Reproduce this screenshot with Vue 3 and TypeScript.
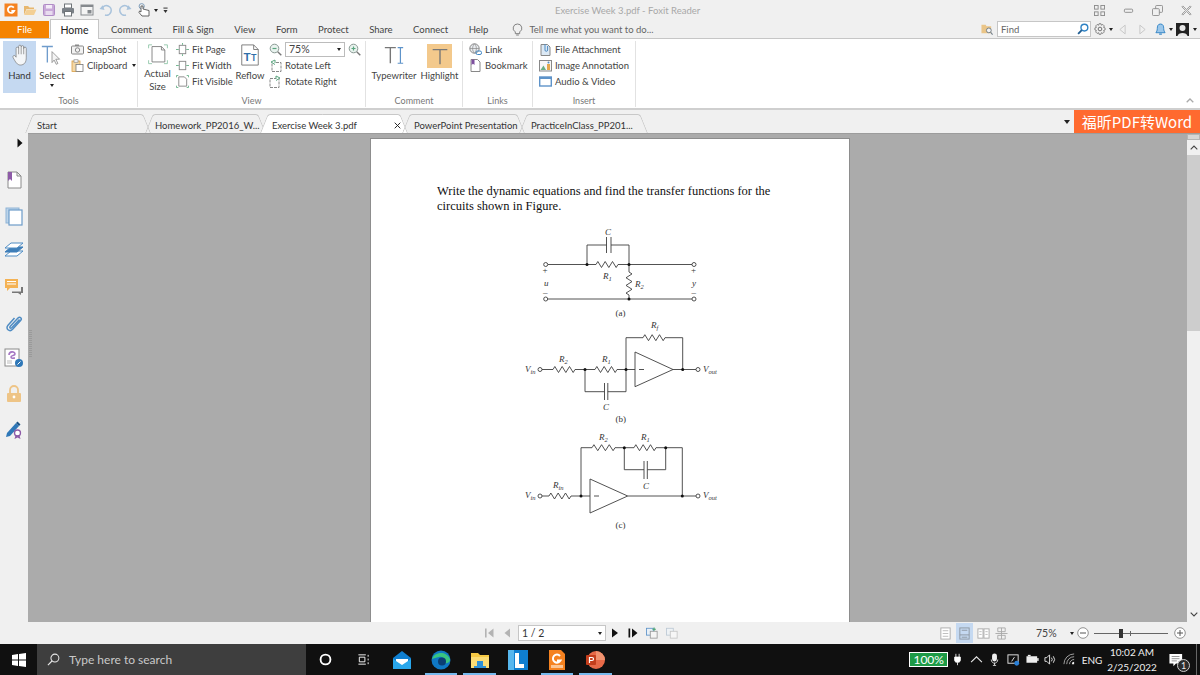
<script setup lang="ts">
const ribbonTabs = ["Comment", "Fill & Sign", "View", "Form", "Protect", "Share", "Connect", "Help"];

const docTabs = [
  { name: "Start", cls: "doc-tab--start" },
  { name: "Homework_PP2016_W...", cls: "doc-tab--homework" },
  { name: "Exercise Week 3.pdf", cls: "doc-tab--active" },
  { name: "PowerPoint Presentation", cls: "doc-tab--ppt" },
  { name: "PracticeInClass_PP201...", cls: "doc-tab--practice" },
];

// zigzag for a resistor, horizontal
const zigH = (x1: number, x2: number, y: number) => {
  const step = (x2 - x1) / 12;
  let d = `M${x1} ${y}`;
  for (let i = 1; i < 12; i += 2) {
    d += ` L${x1 + step * i} ${y + (i % 4 === 1 ? -3 : 3)}`;
  }
  return d + ` L${x2} ${y}`;
};

const zigV = (x: number, y1: number, y2: number) => {
  const step = (y2 - y1) / 12;
  let d = `M${x} ${y1}`;
  for (let i = 1; i < 12; i += 2) {
    d += ` L${x + (i % 4 === 1 ? 3 : -3)} ${y1 + step * i}`;
  }
  return d + ` L${x} ${y2}`;
};

const wires = [
  // (a)
  "M548 264.5 H596 M618 264.5 H692 M548 299 H692 M587 264.5 V245 H606.5 M611 245 H629 V264.5 M629 264.5 V272 M629 295 V299",
  "M606.5 237 V253 M611 237 V253",
  zigH(596, 618, 264.5),
  zigV(629, 272, 295),
  // (b)
  "M542 369.5 H553 M575 369.5 H595 M617 369.5 H635 M626 369.5 V337.7 H643 M665 337.7 H682.7 V369.5 M673 369.5 H696",
  "M585 369.5 V391.7 H604.5 M607.8 391.7 H626 V369.5 M604.5 383 V400 M607.8 383 V400",
  "M635 352 V386.7 L673 369.5 Z M639 369.5 H644",
  zigH(553, 575, 369.5),
  zigH(595, 617, 369.5),
  zigH(643, 665, 337.7),
  // (c)
  "M542 496 H549 M571 496 H590 M581 496 V447.7 H592 M615 447.7 H634 M656 447.7 H682.3 V496 M627.7 496 H696",
  "M624.3 447.7 V469.7 H644 M647.3 469.7 H665.7 V447.7 M644 461 V479 M647.3 461 V479",
  "M590 479 V513 L627.7 496 Z M594 496 H599",
  zigH(549, 571, 496),
  zigH(592, 615, 447.7),
  zigH(634, 656, 447.7),
];

const terminals = [
  [545.7, 264.5], [545.7, 299], [694, 264.5], [694, 299],
  [540, 369.5], [698, 369.5],
  [540, 496], [698, 496],
];

const nodes = [
  [587, 264.5], [629, 264.5], [629, 299],
  [585, 369.5], [626, 369.5], [682.7, 369.5],
  [581, 496], [624.3, 447.7], [665.7, 447.7], [682.3, 496],
];

const taskApps = ["ring", "view", "mail", "edge", "folder", "lapp", "foxit", "ppt"];
const runningApps = ["edge", "folder", "foxit", "ppt"];
</script>

<template>
  <div class="app">
    <header class="titlebar">
      <div class="qat">
        <svg class="qat-icon" viewBox="0 0 14 14"><rect x="0.5" y="0.5" width="13" height="13" fill="#f58220" /><path d="M9.8 4.6 A3.3 3.3 0 1 0 10.2 8 H7.4" fill="none" stroke="#fff" stroke-width="1.8" /></svg>
        <svg class="qat-icon" viewBox="0 0 14 14"><path d="M1 3 H5 L6.5 4.5 H11 V6 H3.5 L1 12 Z" fill="#e7b76e" /><path d="M3.7 6.5 H13.5 L11 12 H1.2 Z" fill="#f3cf94" /></svg>
        <svg class="qat-icon" viewBox="0 0 14 14"><rect x="1.5" y="1.5" width="11" height="11" rx="1" fill="#c8a9d8" stroke="#b08cc6" /><rect x="4" y="2" width="6" height="3.5" fill="#f3ecf7" /><rect x="3.5" y="8" width="7" height="4" fill="#e8dcef" /></svg>
        <svg class="qat-icon" viewBox="0 0 14 14"><rect x="3.5" y="1" width="7" height="4" fill="#fff" stroke="#6f7478" /><rect x="1" y="5" width="12" height="5.5" rx="1" fill="#7b8187" /><rect x="3.5" y="8.5" width="7" height="4.5" fill="#fff" stroke="#6f7478" /></svg>
        <svg class="qat-icon" viewBox="0 0 14 14"><rect x="1" y="2" width="12" height="10" fill="#f4f4f4" stroke="#85898d" /><rect x="1" y="2" width="12" height="2" fill="#85898d" /><rect x="7.5" y="7" width="4" height="3.5" fill="#85898d" /></svg>
        <svg class="qat-icon" viewBox="0 0 14 14"><path d="M3 5.5 A4.8 4.8 0 1 1 6 12" fill="none" stroke="#a9c3dc" stroke-width="1.6" /><path d="M0.5 6 L5.5 7 L3.7 2.2 Z" fill="#a9c3dc" /></svg>
        <svg class="qat-icon" viewBox="0 0 14 14"><path d="M11 5.5 A4.8 4.8 0 1 0 8 12" fill="none" stroke="#a9c3dc" stroke-width="1.6" /><path d="M13.5 6 L8.5 7 L10.3 2.2 Z" fill="#a9c3dc" /></svg>
        <svg class="qat-icon" viewBox="0 0 14 14"><circle cx="4.7" cy="3.2" r="2.6" fill="none" stroke="#7e9cb8" /><path d="M4 3 V9 L2.5 8 L2 9.5 L5 13 H12 V7.5 L6 6 V3 Z" fill="#fff" stroke="#555" stroke-width="0.9" /></svg>
        <span class="caret qat-caret"></span>
        <svg class="qat-more" viewBox="0 0 6 8"><rect x="0.5" y="0.5" width="5" height="1.2" fill="#333" /><path d="M0.5 3.5 H5.5 L3 7 Z" fill="#333" /></svg>
      </div>
      <div class="title">Exercise Week 3.pdf - Foxit Reader</div>
      <div class="win-btns">
        <svg viewBox="0 0 12 12"><g fill="none" stroke="#8b8b8b"><rect x="0.5" y="0.5" width="4" height="4" /><rect x="7.5" y="0.5" width="4" height="4" /><rect x="0.5" y="7.5" width="4" height="4" /><rect x="7.5" y="7.5" width="4" height="4" /></g></svg>
        <svg viewBox="0 0 12 12"><rect x="1.5" y="4.5" width="9" height="3.5" rx="1" fill="none" stroke="#8b8b8b" /></svg>
        <svg viewBox="0 0 12 12"><g fill="none" stroke="#8b8b8b"><rect x="4" y="0.5" width="7.5" height="7.5" rx="1" /><rect x="0.5" y="4" width="7.5" height="7.5" rx="1" fill="#f0f0f0" /></g></svg>
        <svg viewBox="0 0 12 12"><path d="M2 1 L6 5 L10 1 L11 2 L7 6 L11 10 L10 11 L6 7 L2 11 L1 10 L5 6 L1 2 Z" fill="none" stroke="#8b8b8b" stroke-width="0.9" /></svg>
      </div>
    </header>

    <nav class="tabrow">
      <div class="tab-file">File</div>
      <div class="tab-home">Home</div>
      <div class="tab-list">
        <span v-for="tab in ribbonTabs" :key="tab">{{ tab }}</span>
      </div>
      <svg class="bulb" viewBox="0 0 12 14"><path d="M6 1 A4.6 4.6 0 0 1 8.4 9.6 V11.5 H3.6 V9.6 A4.6 4.6 0 0 1 6 1 Z M4.5 13 H7.5" fill="none" stroke="#7a7a7a" /></svg>
      <span class="tell">Tell me what you want to do...</span>
      <div class="find-area">
        <svg class="find-folder" viewBox="0 0 13 13"><path d="M0.5 2 H5 L6 3.5 H11 V11 H0.5 Z" fill="#eac588" /><circle cx="8.5" cy="8" r="2.6" fill="#f4f4f4" stroke="#6f7c88" /><path d="M10.5 10 L12.5 12.5" stroke="#6f7c88" stroke-width="1.2" /></svg>
        <div class="find-box">
          <span>Find</span>
          <svg viewBox="0 0 13 13"><circle cx="8" cy="5" r="3.7" fill="none" stroke="#2f82c4" stroke-width="1.5" /><path d="M5.2 7.8 L1.2 11.8" stroke="#1f5d92" stroke-width="2" /></svg>
        </div>
        <svg class="gear" viewBox="0 0 13 13"><circle cx="6.5" cy="6.5" r="2" fill="none" stroke="#666" /><path d="M5.4 0.8 H7.6 L8 2.4 L9.6 1.6 L11.2 3.2 L10.4 4.8 L12 5.3 V7.6 L10.4 8.1 L11.2 9.7 L9.6 11.3 L8 10.5 L7.6 12.2 H5.4 L5 10.5 L3.4 11.3 L1.8 9.7 L2.6 8.1 L1 7.6 V5.3 L2.6 4.8 L1.8 3.2 L3.4 1.6 L5 2.4 Z" fill="none" stroke="#666" stroke-width="0.8" /></svg>
        <span class="caret gear-caret"></span>
        <svg class="nav-arrow" viewBox="0 0 8 12"><path d="M7 1 L1 6 L7 11 Z" fill="none" stroke="#c4c4c4" /></svg>
        <svg class="nav-arrow nav-arrow--next" viewBox="0 0 8 12"><path d="M1 1 L7 6 L1 11 Z" fill="none" stroke="#c4c4c4" /></svg>
        <svg class="bell" viewBox="0 0 12 14"><path d="M6 1 C9 1 9.5 3.5 9.5 6 C9.5 8.5 10.5 9.5 11 10.5 H1 C1.5 9.5 2.5 8.5 2.5 6 C2.5 3.5 3 1 6 1 Z" fill="#9cc7ea" stroke="#2f82c4" /><path d="M4.5 12 H7.5" stroke="#2f82c4" stroke-width="1.3" /></svg>
        <span class="caret bell-caret"></span>
        <svg class="avatar" viewBox="0 0 13 13"><rect width="13" height="13" fill="#222" /><circle cx="6.5" cy="5" r="3" fill="#e8e8e8" /><path d="M1.5 13 C2 9 11 9 11.5 13 Z" fill="#e8e8e8" /></svg>
        <span class="caret avatar-caret"></span>
      </div>
    </nav>

    <section class="ribbon">
      <div class="group group--tools">
        <div class="group-body">
          <div class="big big--hand">
            <svg class="big-icon" viewBox="2.5 1.5 16 22.5"><path d="M6.5 15 V6 a1.3 1.3 0 0 1 2.6 0 V4 a1.3 1.3 0 0 1 2.6 0 V4.5 a1.3 1.3 0 0 1 2.6 0 V6 a1.3 1.3 0 0 1 2.6 0 V15 C17 20 15 23 11 23 C7.5 23 6 20 3.5 15.5 C2.6 14 4.3 12.5 5.5 13.6 Z M9.1 6 V12 M11.7 4.5 V12 M14.3 5 V12" fill="#f4f6f8" stroke="#777" stroke-width="0.7" /></svg>
            <span>Hand</span>
          </div>
          <div class="big big--select">
            <svg class="big-icon" viewBox="0 0 26 26"><path d="M1 3 H14 M7.5 3 V22" stroke="#6f9ccc" stroke-width="1.6" fill="none" /><path d="M13 9 L22 18 H17.5 L20 23 L18 24 L15.5 19 L13 22 Z" fill="#f4f4f4" stroke="#777" stroke-width="0.8" /></svg>
            <span>Select</span>
            <span class="caret select-caret"></span>
          </div>
          <div class="stack stack--tools">
            <div class="row">
              <svg class="row-icon" viewBox="0 0 13 13"><rect x="0.5" y="3" width="12" height="8" rx="1" fill="#f2f2f2" stroke="#888" /><rect x="4" y="1.5" width="4" height="1.5" fill="#888" /><circle cx="6.5" cy="7" r="2.2" fill="none" stroke="#888" /></svg>
              <span>SnapShot</span>
            </div>
            <div class="row">
              <svg class="row-icon" viewBox="0 0 13 13"><rect x="1" y="2" width="8" height="10.5" fill="#f3d8a7" stroke="#d99f44" stroke-width="0.8" /><rect x="3" y="0.8" width="4" height="2.4" fill="#fff" stroke="#888" stroke-width="0.7" /><rect x="5" y="5.5" width="7" height="7" fill="#fff" stroke="#777" stroke-width="0.8" /></svg>
              <span>Clipboard</span>
              <span class="caret clip-caret"></span>
            </div>
          </div>
        </div>
        <div class="group-label">Tools</div>
      </div>

      <div class="group group--view">
        <div class="group-body">
          <div class="big big--actual">
            <svg class="big-icon" viewBox="0 0 24 24"><path d="M5 3 H16 L20 7 V21 H5 Z M16 3 V7 H20" fill="#fff" stroke="#777" /><path d="M1 5 V1 H5 M19 1 H23 V5 M1 19 V23 H5 M19 23 H23 V19" fill="none" stroke="#8bc3a5" /></svg>
            <span>Actual</span>
            <span>Size</span>
          </div>
          <div class="stack stack--fit">
            <div class="row">
              <svg class="row-icon" viewBox="0 0 14 14"><rect x="3.5" y="2.5" width="7" height="9" fill="#fff" stroke="#888" /><path d="M7 0 V2 M7 12 V14 M0 7 H3 M11 7 H14" stroke="#6bb28a" /></svg>
              <span>Fit Page</span>
            </div>
            <div class="row">
              <svg class="row-icon" viewBox="0 0 14 14"><rect x="3.5" y="2.5" width="7" height="9" fill="#fff" stroke="#888" /><path d="M0 7 H3 M11 7 H14" stroke="#6bb28a" /></svg>
              <span>Fit Width</span>
            </div>
            <div class="row">
              <svg class="row-icon" viewBox="0 0 14 14"><path d="M3 2 H9 L11.5 4.5 V12 H3 Z" fill="#fff" stroke="#888" /><path d="M0.5 2.5 V0.5 H2.5 M11.5 0.5 H13.5 V2.5 M0.5 11.5 V13.5 H2.5 M11.5 13.5 H13.5 V11.5" fill="none" stroke="#6bb28a" /></svg>
              <span>Fit Visible</span>
            </div>
          </div>
          <div class="big big--reflow">
            <svg class="big-icon" viewBox="0 0 24 24"><path d="M3 1 H16 L21 6 V23 H3 Z M16 1 V6 H21" fill="#fff" stroke="#777" /><text class="reflow-t" x="5" y="18">T</text><text class="reflow-t reflow-t--small" x="13" y="18">T</text></svg>
            <span>Reflow</span>
          </div>
          <div class="stack stack--zoom">
            <div class="row">
              <svg class="row-icon" viewBox="0 0 13 13"><circle cx="5.5" cy="5.5" r="4.3" fill="#e9f3ef" stroke="#8a9a94" /><path d="M3.5 5.5 H7.5" stroke="#5aa57f" stroke-width="1.2" /><path d="M8.7 8.7 L12.3 12.3" stroke="#777" stroke-width="1.4" /></svg>
              <div class="combo">
                <span>75%</span>
                <span class="caret"></span>
              </div>
              <svg class="row-icon zoom-in" viewBox="0 0 13 13"><circle cx="5.5" cy="5.5" r="4.3" fill="#e9f3ef" stroke="#8a9a94" /><path d="M3.5 5.5 H7.5 M5.5 3.5 V7.5" stroke="#5aa57f" stroke-width="1.2" /><path d="M8.7 8.7 L12.3 12.3" stroke="#777" stroke-width="1.4" /></svg>
            </div>
            <div class="row">
              <svg class="row-icon" viewBox="0 0 13 13"><rect x="3" y="3.5" width="9" height="9" fill="#fff" stroke="#888" stroke-dasharray="3 1" /><path d="M6 4 V1 L2 3 L6 5.5" fill="#fff" stroke="#5aa57f" /></svg>
              <span>Rotate Left</span>
            </div>
            <div class="row">
              <svg class="row-icon" viewBox="0 0 13 13"><rect x="1" y="3.5" width="9" height="9" fill="#fff" stroke="#888" stroke-dasharray="3 1" /><path d="M7 4 V1 L11 3 L7 5.5" fill="#fff" stroke="#5aa57f" /></svg>
              <span>Rotate Right</span>
            </div>
          </div>
        </div>
        <div class="group-label">View</div>
      </div>

      <div class="group group--comment">
        <div class="group-body">
          <div class="big big--type">
            <svg class="big-icon" viewBox="0 0 24 24"><path d="M2 4 H14 M8 4 V21" stroke="#777" stroke-width="1.5" fill="none" /><path d="M16 4 H22 M19 4 V21 M16 21 H22" stroke="#5e93c9" stroke-width="1.3" fill="none" /></svg>
            <span>Typewriter</span>
          </div>
          <div class="big big--highlight">
            <div class="highlight-swatch">
              <svg viewBox="0 0 24 24"><path d="M4 5 H20 M12 5 V21" stroke="#777" stroke-width="1.5" fill="none" /></svg>
            </div>
            <span>Highlight</span>
          </div>
        </div>
        <div class="group-label">Comment</div>
      </div>

      <div class="group group--links">
        <div class="group-body">
          <div class="stack">
            <div class="row">
              <svg class="row-icon" viewBox="0 0 13 13"><circle cx="5.5" cy="5.5" r="4.7" fill="#e9ecef" stroke="#888" /><path d="M0.8 5.5 H10.2 M5.5 0.8 C3 3 3 8 5.5 10.2 C8 8 8 3 5.5 0.8" fill="none" stroke="#888" stroke-width="0.7" /><rect x="7" y="8" width="5.5" height="3.5" rx="1.5" fill="none" stroke="#3f87c6" /></svg>
              <span>Link</span>
            </div>
            <div class="row">
              <svg class="row-icon" viewBox="0 0 13 13"><path d="M2 0.5 H8.5 L11 3 V12.5 H2 Z" fill="#fff" stroke="#888" /><path d="M2.5 0.5 H5.5 V6 L4 4.8 L2.5 6 Z" fill="#7d4f9e" /></svg>
              <span>Bookmark</span>
            </div>
          </div>
        </div>
        <div class="group-label">Links</div>
      </div>

      <div class="group group--insert">
        <div class="group-body">
          <div class="stack">
            <div class="row">
              <svg class="row-icon" viewBox="0 0 13 13"><path d="M2 1.5 H8.5 L11 4 V12.5 H2 Z" fill="#dce9f5" stroke="#888" /><path d="M6 1 V7 A1.3 1.3 0 0 0 8.6 7 V3" fill="none" stroke="#4f8cc3" /></svg>
              <span>File Attachment</span>
            </div>
            <div class="row">
              <svg class="row-icon" viewBox="0 0 13 13"><rect x="0.5" y="1.5" width="12" height="10.5" fill="#f7f7f7" stroke="#888" /><path d="M1.5 11 L4.5 6.5 L7 11 Z" fill="#6aae84" /><rect x="8" y="5" width="3" height="6" fill="#e5a84e" /><circle cx="9.5" cy="3.6" r="1" fill="#4f8cc3" /></svg>
              <span>Image Annotation</span>
            </div>
            <div class="row">
              <svg class="row-icon" viewBox="0 0 13 13"><rect x="0.7" y="2" width="11.6" height="9" fill="#fff" stroke="#5e93c9" stroke-width="1.4" /><rect x="0.7" y="2" width="11.6" height="2" fill="#5e93c9" /></svg>
              <span>Audio &amp; Video</span>
            </div>
          </div>
        </div>
        <div class="group-label">Insert</div>
      </div>

      <div class="ribbon-rest">
        <svg class="collapse" viewBox="0 0 8 5"><path d="M0.7 4.3 L4 1 L7.3 4.3" fill="none" stroke="#aaa" stroke-width="1.3" /></svg>
      </div>
    </section>

    <div class="docbar">
      <div
        v-for="tab in docTabs"
        :key="tab.name"
        class="doc-tab"
        :class="tab.cls"
      >
        <span>{{ tab.name }}</span>
        <svg v-if="tab.cls === 'doc-tab--active'" class="doc-close" viewBox="0 0 8 8"><path d="M0.8 0.8 L7.2 7.2 M7.2 0.8 L0.8 7.2" stroke="#222" stroke-width="1.1" /></svg>
      </div>
      <span class="caret doc-caret"></span>
      <div class="promo">福昕PDF转Word</div>
    </div>

    <main class="workspace">
      <aside class="sidebar">
        <svg class="side-arrow" viewBox="0 0 6 10"><path d="M0.5 0.5 L5.5 5 L0.5 9.5 Z" fill="#111" /></svg>
        <div class="side-icons">
          <svg viewBox="0 0 20 20"><path d="M4 2 H13 L17 6 V18 H4 Z M13 2 V6 H17" fill="#fff" stroke="#8a8a8a" /><path d="M4 2 H8 V11 L6 9 L4 11 Z" fill="#8e5ba8" /></svg>
          <svg viewBox="0 0 20 20"><rect x="2" y="2" width="13" height="15" fill="#bcd4ea" stroke="#8fb4d6" /><rect x="5" y="4" width="13" height="15" fill="#fff" stroke="#6d9cc9" stroke-width="1.2" /></svg>
          <svg viewBox="0 0 20 20"><path d="M1 15 L7 10 H19 L13 15 Z" fill="#fff" stroke="#4f8cc3" /><path d="M1 11 L7 6 H19 L13 11 Z" fill="#3f7fb9" stroke="#3f7fb9" /><path d="M1 7 L7 2 H19 L13 7 Z" fill="#fff" stroke="#4f8cc3" /></svg>
          <svg viewBox="0 0 20 20"><path d="M1 2 H14 V11 H6 L3 14 V11 H1 Z" fill="#f4b254" /><path d="M3 4.5 H12 M3 7 H12" stroke="#fff" /><path d="M8 14.5 H17 V10 H19 V16 H17 V18 L14 16 H8 Z" fill="#777" /></svg>
          <svg viewBox="0 0 20 20"><path d="M15.5 6.5 L8 14.5 C6.5 16 5 14.7 6.3 13.2 L14 5 C16 3 18.5 5.5 16.6 7.6 L8.6 16.3 C5.5 19.5 1 15.5 4 12.2 L10.5 5" fill="none" stroke="#4f8cc3" stroke-width="1.5" /></svg>
          <svg viewBox="0 0 20 20"><rect x="1" y="1" width="14" height="17" fill="#fff" stroke="#8a8a8a" /><path d="M5 7 C5 3 11 3 11 6 C11 8 7 7 7 9 C7 11 10 10 11 10" fill="none" stroke="#a678c4" stroke-width="1.6" /><path d="M3 13 H8 M3 15 H8" stroke="#bbb" /><circle cx="15" cy="15" r="4" fill="#2f78b8" /><path d="M13.5 16.5 L16.5 13.5" stroke="#fff" /></svg>
          <svg viewBox="0 0 20 20"><path d="M6 9 V6 A4 4 0 0 1 14 6 V9" fill="none" stroke="#eec486" stroke-width="1.8" /><rect x="3" y="9" width="14" height="9" rx="1" fill="#eec486" /><circle cx="10" cy="13" r="1.4" fill="#fff" /></svg>
          <svg viewBox="0 0 20 20"><path d="M2 17 L3 13 L12 3 L15 6 L6 16 Z" fill="#2f78b8" /><path d="M12 3 L13.5 1.5 L16.5 4.5 L15 6 Z" fill="#1d5384" /><circle cx="13.5" cy="13" r="3" fill="#fff" stroke="#8e5ba8" stroke-width="1.3" /><path d="M11.5 15.5 L10.5 19 L13.5 17.5 L16.5 19 L15.5 15.5" fill="#8e5ba8" /></svg>
        </div>
      </aside>

      <div class="viewer">
        <div class="grip"></div>
        <div class="page-area">
          <div class="page">
            <p class="question">
              Write the dynamic equations and find the transfer functions for the<br />
              circuits shown in Figure.
            </p>
            <svg class="circuits" viewBox="371 215 478 320">
              <g fill="none" stroke="#3e3e3e" stroke-width="0.9">
                <path v-for="(d, i) in wires" :key="i" :d="d" />
                <circle v-for="t in terminals" :key="`t${t[0]}-${t[1]}`" :cx="t[0]" :cy="t[1]" r="2" fill="#fff" />
              </g>
              <circle v-for="n in nodes" :key="`n${n[0]}-${n[1]}`" :cx="n[0]" :cy="n[1]" r="1.5" fill="#111" />

              <g class="lbl">
                <text class="it" x="605" y="235">C</text>
                <text class="it" x="603" y="279">R<tspan class="sub" dy="1.5">1</tspan></text>
                <text class="it" x="635" y="287">R<tspan class="sub" dy="1.5">2</tspan></text>
                <text x="542.5" y="273">+</text>
                <text class="it" x="544" y="285.5">u</text>
                <text x="543" y="295">–</text>
                <text x="691" y="273">+</text>
                <text class="it" x="692" y="285.5">y</text>
                <text x="691.5" y="295">–</text>
                <text x="615.5" y="316">(a)</text>

                <text class="it" x="651" y="328">R<tspan class="sub" dy="1.5">f</tspan></text>
                <text class="it" x="559" y="362">R<tspan class="sub" dy="1.5">2</tspan></text>
                <text class="it" x="602" y="362">R<tspan class="sub" dy="1.5">1</tspan></text>
                <text class="it" x="525" y="372">V<tspan class="sub" dy="1.5">in</tspan></text>
                <text class="it" x="703" y="372">V<tspan class="sub" dy="1.5">out</tspan></text>
                <text class="it" x="603" y="410">C</text>
                <text x="615.5" y="422">(b)</text>

                <text class="it" x="599" y="440">R<tspan class="sub" dy="1.5">2</tspan></text>
                <text class="it" x="641" y="440">R<tspan class="sub" dy="1.5">1</tspan></text>
                <text class="it" x="643" y="489">C</text>
                <text class="it" x="553" y="488">R<tspan class="sub" dy="1.5">in</tspan></text>
                <text class="it" x="525" y="498">V<tspan class="sub" dy="1.5">in</tspan></text>
                <text class="it" x="703" y="498">V<tspan class="sub" dy="1.5">out</tspan></text>
                <text x="615.5" y="528">(c)</text>
              </g>
            </svg>
          </div>
        </div>
        <div class="vscroll">
          <div class="vscroll-split"></div>
          <div class="vscroll-btn">
            <svg viewBox="0 0 8 5"><path d="M0.7 4.3 L4 1 L7.3 4.3" fill="none" stroke="#444" stroke-width="1.1" /></svg>
          </div>
          <div class="vscroll-thumb"></div>
          <div class="vscroll-btn vscroll-btn--down">
            <svg viewBox="0 0 8 5"><path d="M0.7 0.7 L4 4 L7.3 0.7" fill="none" stroke="#444" stroke-width="1.1" /></svg>
          </div>
        </div>
      </div>
    </main>

    <footer class="statusbar">
      <div class="page-nav">
        <svg class="nav-ico" viewBox="0 0 12 12"><path d="M2 1.5 H3.6 V10.5 H2 Z M10.5 1.5 V10.5 L5 6 Z" fill="#b3b3b3" /></svg>
        <svg class="nav-ico" viewBox="0 0 12 12"><path d="M9 1.5 V10.5 L3.5 6 Z" fill="#b3b3b3" /></svg>
        <div class="page-box">
          <span>1 / 2</span>
          <span class="caret"></span>
        </div>
        <svg class="nav-ico" viewBox="0 0 12 12"><path d="M3 1.5 V10.5 L9 6 Z" fill="#111" /></svg>
        <svg class="nav-ico" viewBox="0 0 12 12"><path d="M1.5 1.5 H3.2 V10.5 H1.5 Z M5 1.5 V10.5 L10.5 6 Z" fill="#111" /></svg>
        <svg class="nav-ico nav-ico--copy" viewBox="0 0 14 14"><rect x="0.5" y="1.5" width="8" height="8" fill="#e8f0f7" stroke="#5e93c9" /><rect x="5" y="5" width="8" height="8" fill="#f4f4f4" stroke="#999" /><path d="M9.5 0.5 V4.5 M7.5 2.5 H11.5" stroke="#4aa36f" stroke-width="1.2" /></svg>
        <svg class="nav-ico nav-ico--copy2" viewBox="0 0 14 14"><rect x="0.5" y="1.5" width="8" height="8" fill="#eef2f5" stroke="#bcc9d4" /><rect x="5" y="5" width="8" height="8" fill="#f6f6f6" stroke="#c6c6c6" /></svg>
      </div>
      <div class="status-right">
        <svg class="view-ico" viewBox="0 0 14 14"><rect x="2" y="1" width="10" height="12" fill="#fff" stroke="#aaa" /><path d="M4 4 H10 M4 7 H10 M4 10 H10" stroke="#bbb" /></svg>
        <div class="view-on"><svg class="view-ico" viewBox="0 0 14 14"><rect x="2" y="1" width="10" height="12" fill="none" stroke="#8c96a0" /><path d="M2 8.5 H12 M4 11 H10 M4 3.5 H10" stroke="#8c96a0" /></svg></div>
        <svg class="view-ico" viewBox="0 0 14 14"><rect x="1" y="2" width="5.5" height="10" fill="#fff" stroke="#aaa" /><rect x="7.5" y="2" width="5.5" height="10" fill="#fff" stroke="#aaa" /><path d="M2.5 5 H5 M2.5 8 H5 M9 5 H11.5 M9 8 H11.5" stroke="#bbb" /></svg>
        <svg class="view-ico" viewBox="0 0 14 14"><path d="M3 1 H11 V5 H3 Z M3 9 H11 V13 H3 Z M0.5 7 H13.5 M7 1 V13" fill="none" stroke="#aaa" /></svg>
        <span class="zoom-text">75%</span>
        <span class="caret zoom-caret"></span>
        <svg class="zoom-btn" viewBox="0 0 12 12"><circle cx="6" cy="6" r="5.3" fill="#fff" stroke="#777" stroke-width="0.8" /><path d="M3 6 H9" stroke="#555" /></svg>
        <div class="slider">
          <span class="slider-tick"></span>
          <span class="slider-thumb"></span>
        </div>
        <svg class="zoom-btn" viewBox="0 0 12 12"><circle cx="6" cy="6" r="5.3" fill="#fff" stroke="#777" stroke-width="0.8" /><path d="M3 6 H9 M6 3 V9" stroke="#555" /></svg>
      </div>
    </footer>

    <div class="taskbar">
      <div class="start">
        <svg viewBox="0 0 14 14"><path d="M0 2 L6 1.1 V6.6 H0 Z M7 1 L14 0 V6.6 H7 Z M0 7.4 H6 V12.9 L0 12 Z M7 7.4 H14 V14 L7 13 Z" fill="#fff" /></svg>
      </div>
      <div class="search">
        <svg viewBox="0 0 14 14"><circle cx="8.5" cy="5.5" r="4.3" fill="none" stroke="#e6e6e6" stroke-width="1.1" /><path d="M5.4 8.6 L1 13" stroke="#e6e6e6" stroke-width="1.2" /></svg>
        <span>Type here to search</span>
      </div>
      <div class="task-apps">
        <div
          v-for="app in taskApps"
          :key="app"
          class="task-app"
          :class="{ 'task-app--running': runningApps.includes(app) }"
        >
          <svg v-if="app === 'ring'" class="ring" viewBox="0 0 14 14"><circle cx="7" cy="7" r="5.3" fill="none" stroke="#fff" stroke-width="2" /></svg>
          <svg v-else-if="app === 'view'" class="tview" viewBox="0 0 14 14"><path d="M1.5 2 H9.5 M1.5 12 H9.5 M2.5 4.5 H8.5 V9.5 H2.5 Z M12 2 V4 M12 6 V8 M12 10 V12" fill="none" stroke="#fff" /></svg>
          <svg v-else-if="app === 'mail'" viewBox="0 0 20 20"><path d="M1 8 L10 1 L19 8 V19 H1 Z" fill="#0f7fd1" /><path d="M4 9 H16 V13 L10 16 L4 13 Z" fill="#fff" /><path d="M1 9 L10 15 L19 9 V19 H1 Z" fill="#29a7ec" /></svg>
          <svg v-else-if="app === 'edge'" viewBox="0 0 20 20"><circle cx="10" cy="10" r="9.5" fill="#0f78c4" /><path d="M1 9 C3 2 15 0 19 9 C19.5 13 15 14 12 13 C15 10 12 6 8 7 C5 8 3 8 1 9 Z" fill="#39c481" /><circle cx="11" cy="11.5" r="4" fill="#0b3e73" /></svg>
          <svg v-else-if="app === 'folder'" viewBox="0 0 20 20"><path d="M1 3 H8 L10 5 H19 V18 H1 Z" fill="#f6c944" /><rect x="1" y="7" width="18" height="11" fill="#fbdc75" /><rect x="7" y="11" width="6" height="5" fill="#2c8fd6" /><rect x="4" y="16" width="12" height="2" fill="#2c8fd6" /></svg>
          <svg v-else-if="app === 'lapp'" viewBox="0 0 20 20"><rect x="0" y="0" width="20" height="20" fill="#0f7fd1" /><rect x="0" y="0" width="6" height="20" fill="#57b7ee" /><path d="M7 3 H11 V14 H16 V18 H7 Z" fill="#fff" /></svg>
          <svg v-else-if="app === 'foxit'" viewBox="0 0 20 20"><path d="M2 0 H14 L18 4 V20 H2 Z" fill="#f58220" /><path d="M13 6 A4 4 0 1 0 13.5 10.5 H10" fill="none" stroke="#fff" stroke-width="2" /><rect x="4" y="15" width="12" height="3" fill="#fbc593" /></svg>
          <svg v-else viewBox="0 0 20 20"><circle cx="11" cy="10" r="9" fill="#e86a48" /><path d="M11 1 A9 9 0 0 1 20 10 H11 Z" fill="#f0926f" /><rect x="1" y="5" width="10" height="10" rx="1" fill="#c43e1c" /><path d="M4.5 13 V7.5 H7 A1.5 1.5 0 0 1 7 10.5 H4.5" fill="none" stroke="#fff" stroke-width="1.2" /></svg>
        </div>
      </div>
      <div class="tray">
        <div class="battery-meter"><span>100%</span></div>
        <div class="tray-slot">
          <svg viewBox="0 0 10 16"><path d="M3 1 V5 M7 1 V5 M1.5 5 H8.5 V9 C8.5 11 6.5 11.5 5 11.5 C3.5 11.5 1.5 11 1.5 9 Z M5 11.5 V15" fill="#fff" stroke="#fff" /></svg>
        </div>
        <div class="tray-slot">
          <svg viewBox="0 0 12 8"><path d="M1 6.5 L6 1.5 L11 6.5" fill="none" stroke="#e8e8e8" /></svg>
        </div>
        <div class="tray-slot">
          <svg viewBox="0 0 10 16"><rect x="2" y="0.5" width="6" height="10" rx="3" fill="#eee" /><path d="M1 8 C1 14 9 14 9 8 M5 12 V15 M3 15.3 H7" fill="none" stroke="#eee" /></svg>
        </div>
        <div class="tray-slot">
          <svg viewBox="0 0 14 14"><rect x="1" y="2" width="11" height="9" fill="none" stroke="#e8e8e8" /><path d="M5 9 L8 4.5" stroke="#e8e8e8" /><circle cx="10.5" cy="11" r="2.6" fill="#2a7fd6" /></svg>
        </div>
        <div class="tray-slot">
          <svg viewBox="0 0 14 10"><rect x="0.5" y="1.5" width="11.5" height="7" fill="#eee" /><rect x="12" y="3.5" width="1.6" height="3" fill="#eee" /><rect x="2" y="0" width="3" height="1.5" fill="#eee" /></svg>
        </div>
        <div class="tray-slot">
          <svg viewBox="0 0 14 14"><path d="M1 5 H3 L6 2 V12 L3 9 H1 Z" fill="none" stroke="#e8e8e8" /><path d="M8 5 A3 3 0 0 1 8 9 M10 3.5 A5.5 5.5 0 0 1 10 10.5" fill="none" stroke="#e8e8e8" /></svg>
        </div>
        <div class="tray-slot">
          <svg viewBox="0 0 14 14"><path d="M1 12 A11 11 0 0 1 12 1 M4 12 A8 8 0 0 1 12 4 M7 12 A5 5 0 0 1 12 7" fill="none" stroke="#aaa" /><path d="M9.5 12 A2.5 2.5 0 0 1 12 9.5 V12 Z" fill="#eee" /></svg>
        </div>
        <span class="tray-eng">ENG</span>
        <div class="clock">
          <span>10:02 AM</span>
          <span>2/25/2022</span>
        </div>
        <div class="notify">
          <svg viewBox="0 0 16 16"><path d="M0.5 1 H15 V12 H8 L5 15 V12 H0.5 Z" fill="#fff" /><path d="M3 4 H12 M3 6.5 H12 M3 9 H9" stroke="#888" /></svg>
          <span class="notify-badge">1</span>
        </div>
        <div class="show-desktop"></div>
      </div>
    </div>
  </div>
</template>

<style scoped>
.app {
  width: 1200px;
  height: 675px;
  overflow: hidden;
  display: flex;
  flex-direction: column;
  background: #f0f0f0;
  color: #444;
  font-family: Lato, "Open Sans", "Liberation Sans", sans-serif;
  font-size: 9.5px;
}

.caret {
  display: inline-block;
  width: 0;
  height: 0;
  border-left: 2.5px solid transparent;
  border-right: 2.5px solid transparent;
  border-top: 3px solid #222;
}

/* title bar */
.titlebar {
  height: 20px;
  flex: none;
  display: flex;
  align-items: center;
  position: relative;
}

.qat {
  width: 555px;
  display: flex;
  align-items: center;
  padding-left: 4px;
  box-sizing: border-box;
  gap: 5px;
}

.qat-icon {
  width: 14px;
  height: 14px;
}

.qat-caret {
  margin-left: -2px;
}

.qat-more {
  width: 5px;
  height: 7px;
}

.title {
  width: 145px;
  white-space: nowrap;
  color: #a8a8a8;
  font-size: 9.5px;
}

.win-btns {
  margin-left: auto;
  display: flex;
  gap: 18px;
  padding-right: 8px;
  align-items: center;
}

.win-btns svg {
  width: 11px;
  height: 11px;
}

/* ribbon tabs */
.tabrow {
  height: 19px;
  flex: none;
  display: flex;
  align-items: stretch;
  border-bottom: 1px solid #c6c6c6;
  box-sizing: border-box;
  position: relative;
}

.tab-file {
  width: 49px;
  background: #f58300;
  color: #fff;
  margin-top: 1px;
  display: flex;
  align-items: center;
  justify-content: center;
}

.tab-home {
  width: 49px;
  margin-left: 1px;
  margin-bottom: -1px;
  margin-top: -1px;
  background: #fff;
  border: 1px solid #c6c6c6;
  border-bottom: none;
  box-sizing: border-box;
  color: #222;
  font-size: 10.5px;
  display: flex;
  align-items: center;
  justify-content: center;
}

.tab-list {
  display: flex;
  align-items: center;
  gap: 20.5px;
  padding-left: 12px;
  white-space: nowrap;
}

.bulb {
  width: 11px;
  height: 13px;
  align-self: center;
  margin-left: 24px;
}

.tell {
  align-self: center;
  margin-left: 6px;
  color: #666;
  white-space: nowrap;
}

.find-area {
  margin-left: auto;
  display: flex;
  align-items: center;
  padding-right: 3px;
}

.find-folder {
  width: 12px;
  height: 12px;
}

.find-box {
  width: 94px;
  height: 16px;
  margin-left: 4px;
  box-sizing: border-box;
  background: #fff;
  border: 1px solid #c6c6c6;
  display: flex;
  align-items: center;
  justify-content: space-between;
  padding: 0 1px 0 3px;
  color: #666;
}

.find-box svg {
  width: 12px;
  height: 12px;
}

.gear {
  width: 12px;
  height: 12px;
  margin-left: 3px;
}

.gear-caret {
  margin-left: 3px;
}

.nav-arrow {
  width: 7px;
  height: 11px;
  margin-left: 6px;
}

.nav-arrow--next {
  margin-left: 13px;
}

.bell {
  width: 11px;
  height: 13px;
  margin-left: 9px;
}

.bell-caret {
  margin-left: 3px;
}

.avatar {
  width: 13px;
  height: 13px;
  margin-left: 3px;
}

.avatar-caret {
  margin-left: 4px;
}

/* ribbon */
.ribbon {
  height: 69px;
  flex: none;
  display: flex;
  background: #fff;
  border-bottom: 2px solid #cfcfcf;
  box-sizing: content-box;
  line-height: 13px;
}

.group {
  display: flex;
  flex-direction: column;
  margin: 2px 0 1px;
  border-right: 1px solid #e2e2e2;
  box-sizing: border-box;
}

.group--tools { width: 138px; }
.group--view { width: 228px; }
.group--comment { width: 97px; }
.group--links { width: 70px; }
.group--insert { width: 103px; }

.group-body {
  flex: 1;
  display: flex;
  min-height: 0;
  padding-left: 6px;
}

.group-label {
  height: 14px;
  line-height: 16px;
  text-align: center;
  color: #777;
  font-size: 9px;
}

.big {
  display: flex;
  flex-direction: column;
  align-items: center;
  white-space: nowrap;
  padding-top: 3px;
  box-sizing: border-box;
}

.big-icon {
  width: 22px;
  height: 22px;
  margin-bottom: 2.5px;
}

.group--tools .group-body {
  padding-left: 3px;
}

.big--hand {
  width: 33px;
  background: #c5d9f1;
  color: #333;
}

.big--select {
  width: 24px;
  margin-left: 4px;
}

.select-caret {
  margin-top: 2px;
}

.stack {
  display: flex;
  flex-direction: column;
}

.row {
  height: 16px;
  display: flex;
  align-items: center;
  gap: 3px;
  white-space: nowrap;
}

.row-icon {
  width: 13px;
  height: 13px;
  flex: none;
}

.stack--tools {
  margin-left: 7px;
}

.clip-caret {
  margin-left: 2px;
}

.big--actual {
  width: 27px;
}

.stack--fit {
  width: 60px;
  margin-left: 5px;
}

.big--reflow {
  width: 26px;
  margin-left: 1px;
}

.stack--zoom {
  margin-left: 6px;
}

.combo {
  width: 60px;
  height: 15px;
  box-sizing: border-box;
  background: #fff;
  border: 1px solid #bcbcbc;
  display: flex;
  align-items: center;
  justify-content: space-between;
  padding: 0 3px;
  font-size: 10.5px;
}

.zoom-in {
  margin-left: 0;
}

.reflow-t {
  fill: #2f6ea8;
  font-size: 13px;
  font-weight: 700;
}

.reflow-t--small {
  font-size: 10px;
}

.big--type {
  width: 44px;
}

.big--highlight {
  width: 33px;
  margin-left: 7px;
}

.highlight-swatch {
  width: 25px;
  height: 24px;
  margin-bottom: 0.5px;
  background: #f3c98c;
  display: flex;
  align-items: center;
  justify-content: center;
}

.highlight-swatch svg {
  width: 22px;
  height: 22px;
}

.ribbon-rest {
  flex: 1;
  display: flex;
  justify-content: flex-end;
  align-items: flex-end;
  padding: 0 6px 5px 0;
}

.collapse {
  width: 8px;
  height: 5px;
}

/* document tabs */
.docbar {
  height: 23px;
  flex: none;
  display: flex;
  padding-left: 28px;
  align-items: stretch;
  position: relative;
}

.doc-tab {
  position: relative;
  box-sizing: border-box;
  display: flex;
  align-items: center;
  white-space: nowrap;
  padding-top: 7px;
  color: #333;
}

.doc-tab::before,
.doc-tab::after {
  content: "";
  position: absolute;
  top: 4px;
  bottom: 0;
  width: 55%;
  border-top: 1px solid #c8c8c8;
  box-sizing: border-box;
}

.doc-tab::before {
  left: -3px;
  border-left: 1px solid #c8c8c8;
  border-top-left-radius: 3px;
  transform: skewX(-22deg);
  transform-origin: bottom left;
}

.doc-tab::after {
  right: -3px;
  border-right: 1px solid #c8c8c8;
  border-top-right-radius: 3px;
  transform: skewX(22deg);
  transform-origin: bottom right;
}

.doc-tab span,
.doc-tab svg {
  position: relative;
  z-index: 1;
}

.doc-tab--start { width: 120px; padding-left: 9px; }
.doc-tab--homework { width: 115px; padding-left: 7px; }
.doc-tab--active { width: 142px; padding-left: 9px; }
.doc-tab--ppt { width: 117px; padding-left: 9px; }
.doc-tab--practice { width: 123px; padding-left: 9px; }

.doc-tab--active::before,
.doc-tab--active::after {
  background: #fff;
}

.doc-close {
  width: 7px;
  height: 7px;
  margin-left: auto;
  margin-right: 4px;
}

.doc-caret {
  margin-left: auto;
  align-self: center;
  margin-right: 4px;
  border-left-width: 3.5px;
  border-right-width: 3.5px;
  border-top-width: 4px;
}

.promo {
  width: 126px;
  flex: none;
  background: #ff6a2f;
  color: #fff;
  font-family: "Noto Sans CJK SC", "Noto Sans", sans-serif;
  font-size: 15px;
  display: flex;
  align-items: center;
  justify-content: center;
  white-space: nowrap;
}

/* workspace */
.workspace {
  flex: 1;
  min-height: 0;
  display: flex;
}

.sidebar {
  width: 28px;
  flex: none;
  background: #f0f0f0;
  display: flex;
  flex-direction: column;
  align-items: center;
}

.side-arrow {
  width: 6px;
  height: 10px;
  margin: 5px 0 0 12px;
}

.side-icons {
  margin-top: 22px;
  display: flex;
  flex-direction: column;
  gap: 15.7px;
}

.side-icons svg {
  width: 20px;
  height: 20px;
  display: block;
}

.viewer {
  flex: 1;
  min-width: 0;
  display: flex;
  position: relative;
  background: #ababab;
  border-top: 1px solid #9c9c9c;
  box-sizing: border-box;
}

.grip {
  position: absolute;
  left: 1px;
  top: 196px;
  width: 3px;
  height: 28px;
  background: repeating-linear-gradient(#9a9a9a 0 1px, transparent 1px 2px);
}

.page-area {
  flex: 1;
  min-width: 0;
  overflow: hidden;
  padding: 5px 0 0 343px;
}

.page {
  width: 478px;
  height: 600px;
  background: #fff;
  box-shadow: 0 0 0 1px #8d8d8d;
  padding-top: 45px;
  box-sizing: border-box;
  display: flex;
  flex-direction: column;
}

.question {
  margin: 0 0 0 66px;
  font-family: "Liberation Serif", serif;
  font-size: 12.5px;
  line-height: 15px;
  color: #111;
  white-space: nowrap;
}

.circuits {
  width: 478px;
  height: 320px;
  margin-top: 1px;
  flex: none;
}

.lbl text {
  font-family: "Liberation Serif", serif;
  font-size: 9px;
  fill: #333;
}

.lbl .it {
  font-style: italic;
}

.lbl .sub {
  font-size: 6.5px;
}

.vscroll {
  width: 13px;
  flex: none;
  background: #f0f0f0;
  display: flex;
  flex-direction: column;
}

.vscroll-split {
  height: 6px;
  background: #d6d6d6;
  border: 1px solid #b5b5b5;
  box-sizing: border-box;
}

.vscroll-btn {
  height: 15px;
  flex: none;
  display: flex;
  align-items: center;
  justify-content: center;
}

.vscroll-btn svg {
  width: 8px;
  height: 5px;
}

.vscroll-thumb {
  height: 176px;
  background: #cdcdcd;
  flex: none;
}

.vscroll-btn--down {
  margin-top: auto;
}

/* status bar */
.statusbar {
  height: 22px;
  flex: none;
  display: flex;
  align-items: center;
  background: #f0f0f0;
  padding-left: 483px;
  padding-right: 14px;
  box-sizing: border-box;
}

.page-nav {
  display: flex;
  align-items: center;
  gap: 6px;
}

.nav-ico {
  width: 12px;
  height: 12px;
}

.nav-ico--copy {
  margin-left: 1px;
}

.nav-ico--copy2 {
  margin-left: 2px;
}

.page-box {
  width: 88px;
  height: 16px;
  margin: 0 -3px 0 -1px;
  box-sizing: border-box;
  background: #fff;
  border: 1px solid #c6c6c6;
  padding: 0 3px;
  display: flex;
  align-items: center;
  justify-content: space-between;
  font-size: 10.5px;
  color: #333;
}

.status-right {
  margin-left: auto;
  display: flex;
  align-items: center;
}

.view-ico {
  width: 13px;
  height: 13px;
  display: block;
}

.view-on {
  width: 17px;
  height: 20px;
  margin: 0 4px 0 4px;
  background: #c5d9f1;
  display: flex;
  align-items: center;
  justify-content: center;
}

.status-right > .view-ico + .view-on + .view-ico + .view-ico {
  margin-left: 5px;
}

.zoom-text {
  margin-left: 28px;
  width: 22px;
  font-size: 10.5px;
}

.zoom-caret {
  margin-left: 12px;
}

.zoom-btn {
  width: 12px;
  height: 12px;
  margin-left: 3px;
}

.slider {
  position: relative;
  width: 74px;
  height: 1px;
  background: #666;
  margin: 0 3px 0 5px;
}

.slider-thumb {
  position: absolute;
  left: 25px;
  top: -4px;
  width: 4px;
  height: 9px;
  background: #333;
}

.slider-tick {
  position: absolute;
  left: 36px;
  top: -2px;
  width: 1px;
  height: 5px;
  background: #666;
}

/* taskbar */
.taskbar {
  height: 31px;
  flex: none;
  display: flex;
  align-items: stretch;
  background: #101010;
  color: #eee;
}

.start {
  width: 37px;
  display: flex;
  align-items: center;
  justify-content: center;
}

.start svg {
  width: 14px;
  height: 14px;
}

.search {
  width: 269px;
  background: #3e3e3e;
  display: flex;
  align-items: center;
  gap: 9px;
  padding-left: 10px;
  box-sizing: border-box;
  color: #c9c9c9;
  font-size: 12px;
}

.search svg {
  width: 13px;
  height: 13px;
}

.task-apps {
  display: flex;
}

.task-app {
  position: relative;
  width: 38.6px;
  display: flex;
  align-items: center;
  justify-content: center;
}

.task-app svg {
  width: 20px;
  height: 20px;
}

.task-app .ring {
  width: 13px;
  height: 13px;
}

.task-app .tview {
  width: 13px;
  height: 13px;
}

.task-app--running::after {
  content: "";
  position: absolute;
  left: 3px;
  right: 3px;
  bottom: 0;
  height: 2px;
  background: #76b9ed;
}

.tray {
  margin-left: auto;
  display: flex;
  align-items: center;
  height: 100%;
  font-size: 10px;
}

.battery-meter {
  width: 39px;
  height: 15px;
  box-sizing: border-box;
  border: 1px solid #fff;
  background: #1d9a46;
  color: #fff;
  font-size: 12px;
  display: flex;
  align-items: center;
  justify-content: center;
  position: relative;
}

.tray-slot {
  width: 18.7px;
  display: flex;
  align-items: center;
  justify-content: center;
}

.tray-slot svg {
  width: 13px;
  height: 13px;
}

.tray-eng {
  width: 26px;
  text-align: center;
}

.clock {
  width: 54px;
  display: flex;
  flex-direction: column;
  align-items: center;
  line-height: 15px;
  white-space: nowrap;
}

.notify {
  width: 37px;
  height: 100%;
  position: relative;
  display: flex;
  align-items: center;
  justify-content: center;
}

.notify svg {
  width: 14px;
  height: 14px;
  margin-right: 3px;
}

.notify-badge {
  position: absolute;
  left: 18px;
  top: 15px;
  width: 13px;
  height: 13px;
  border-radius: 50%;
  background: #2c2c2c;
  border: 1px solid #ccc;
  box-sizing: border-box;
  text-align: center;
  line-height: 11px;
  font-size: 9px;
}

.show-desktop {
  width: 4px;
  height: 100%;
  border-left: 1px solid #666;
  box-sizing: border-box;
}
</style>
